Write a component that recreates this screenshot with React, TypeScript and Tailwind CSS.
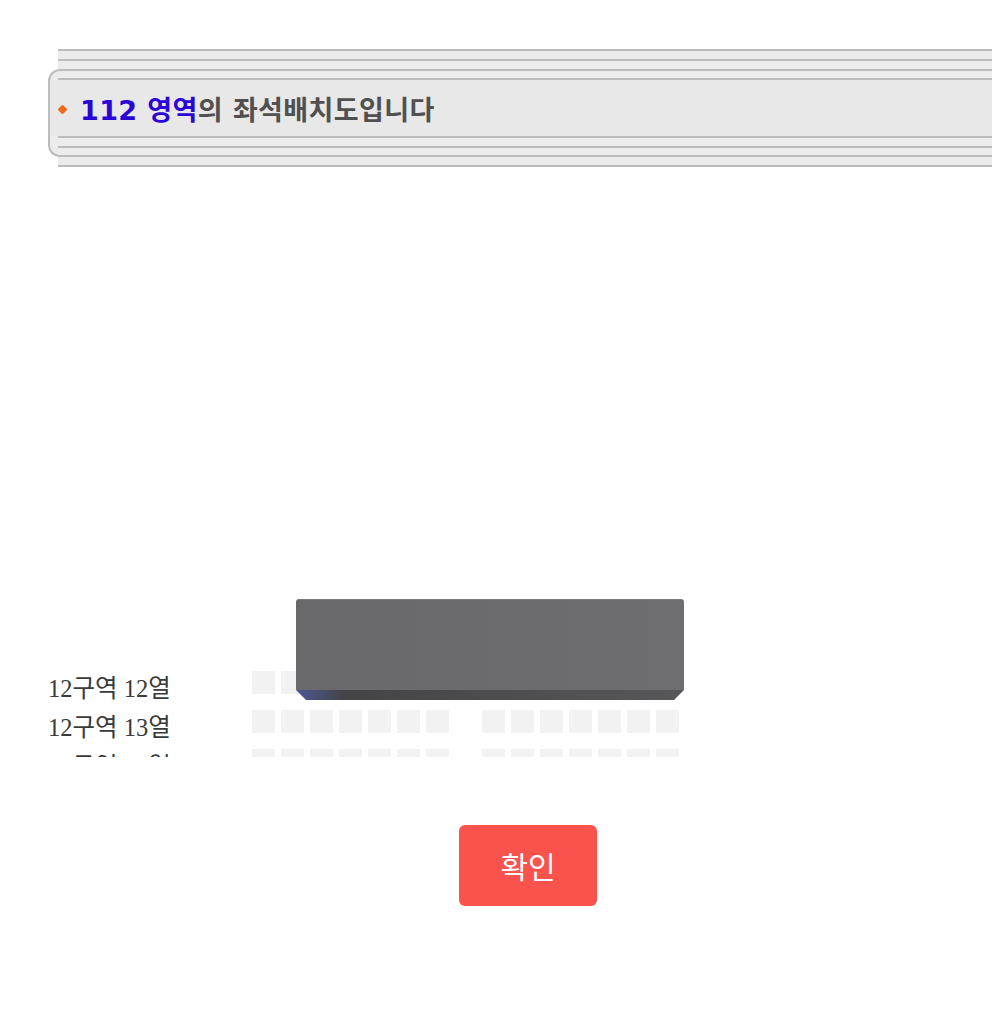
import React from 'react';

const rows = ['12구역 12열', '12구역 13열', '12구역 14열'];
const seats = [0, 1, 2, 3, 4, 5, 6];

const Line = ({ indent = true }: { indent?: boolean }) => (
  <div className={`${indent ? 'ml-[8px]' : ''} h-[2px] bg-[#bcbcbc]`}></div>
);

const Gap = ({ h, indent = true }: { h: string; indent?: boolean }) => (
  <div className={`${indent ? 'ml-[8px]' : ''} ${h} bg-[#ececec]`}></div>
);

const App = () => {
  return (
    <div className="min-h-[1024px] bg-white overflow-hidden font-['Noto_Sans','Noto_Sans_CJK_KR',sans-serif]">
      {/* Title bar */}
      <div className="pt-[49px] pl-[48px]">
        <div className="pl-[10px]">
          <Line indent={false} />
          <Gap h="h-[8px]" indent={false} />
          <Line indent={false} />
          <Gap h="h-[8px]" indent={false} />
        </div>
        <div className="rounded-l-[12px] border-y-2 border-l-2 border-[#bcbcbc] bg-[#ececec]">
          <div className="h-[7px]"></div>
          <Line />
          <div className="h-[56px] bg-[#e8e8e8] flex items-center pl-[9px]">
            <div className="w-[7px] h-[7px] rotate-45 rounded-[1px] bg-[#ef6a1c] mt-[2px]"></div>
            <h1 className="ml-[14px] mt-[4px] text-[27px] leading-none font-bold text-[#505050] font-['DejaVu_Sans','Noto_Sans_CJK_KR',sans-serif] tracking-[0.4px]">
              <span className="text-[#2a05d8]">112 영역</span>의 좌석배치도입니다
            </h1>
          </div>
          <Line />
          <Gap h="h-[8px]" />
          <Line />
          <Gap h="h-[7px]" />
        </div>
        <div className="pl-[10px]">
          <Gap h="h-[8px]" indent={false} />
          <Line indent={false} />
        </div>
      </div>

      {/* Seat map */}
      <div className="relative mt-[432px] h-[158px] overflow-hidden">
        <div className="absolute left-[296px] top-0 w-[388px] h-[101px] [clip-path:polygon(0_0,100%_0,100%_calc(100%-10px),calc(100%-10px)_100%,10px_100%,0_calc(100%-10px))]">
          <div className="h-[91px] rounded-t-[3px] bg-gradient-to-r from-[#69696b] to-[#6e6e70] border-t border-[#7a7a7e]"></div>
          <div className="h-[10px] bg-gradient-to-r from-[#4d5795] from-0% via-[#444447] via-[12%] to-[#58585a]"></div>
        </div>
        <div className="pt-[72px] pl-[48px]">
          {rows.map((label) => (
            <div key={label} className="flex h-[39px]">
              <div className="w-[204px] pt-[6px] text-[24.5px] leading-[24px] text-[#3a3a3a] font-['Liberation_Serif','Noto_Sans_CJK_KR',serif] whitespace-nowrap">
                {label}
              </div>
              <div className="flex gap-[6px]">
                {seats.map((s) => (
                  <div key={s} className="w-[23px] h-[23px] bg-[#f2f2f2]"></div>
                ))}
              </div>
              <div className="flex gap-[6px] ml-[33px]">
                {seats.map((s) => (
                  <div key={s} className="w-[23px] h-[23px] bg-[#f2f2f2]"></div>
                ))}
              </div>
            </div>
          ))}
        </div>
      </div>

      {/* Confirm */}
      <div className="mt-[68px] pl-[459px]">
        <button className="w-[138px] h-[81px] rounded-[6px] bg-[#fa534e] text-white text-[30px] font-['Noto_Sans_CJK_KR',sans-serif]">
          확인
        </button>
      </div>
    </div>
  );
};

export default App;
